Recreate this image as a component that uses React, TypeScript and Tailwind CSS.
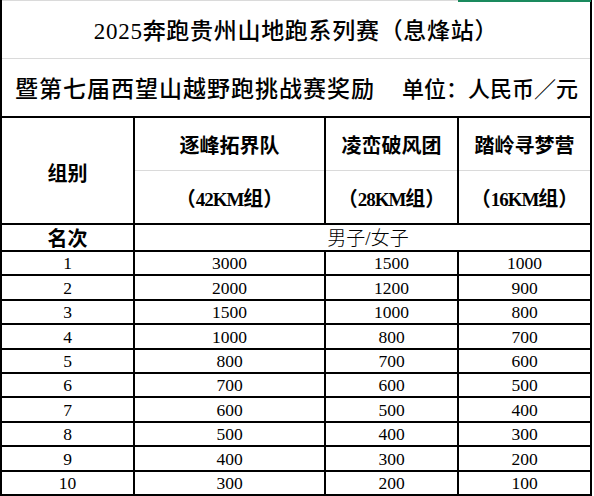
import React from "react";

const rows: [number, number, number, number][] = [
  [1, 3000, 1500, 1000],
  [2, 2000, 1200, 900],
  [3, 1500, 1000, 800],
  [4, 1000, 800, 700],
  [5, 800, 700, 600],
  [6, 700, 600, 500],
  [7, 600, 500, 400],
  [8, 500, 400, 300],
  [9, 400, 300, 200],
  [10, 300, 200, 100],
];

const font = { fontFamily: '"Liberation Serif", "Noto Sans CJK SC", serif' };

function HeadCell({ name, km }: { name: string; km: string }) {
  return (
    <div className="bg-white flex flex-col">
      <div className="h-[53px] border-b border-[#dadada] flex items-center justify-center pt-[4px] text-[20px] font-bold leading-none">
        {name}
      </div>
      <div className="flex-1 flex items-center justify-center pt-[4px] text-[20px] font-bold leading-none">
        <span>（</span>
        <span className="tracking-[-1px] text-[19px]">{km}</span>
        <span>组）</span>
      </div>
    </div>
  );
}

export default function App() {
  return (
    <div
      className="w-[594px] h-[496px] bg-white relative overflow-hidden text-black"
      style={font}
    >
      <div className="w-[592px] border-x-2 border-black">
        <div className="h-[59px] border-y border-[#dadada] flex items-center justify-center pt-[3px] text-[23px] font-medium leading-none tracking-[0.7px]">
          2025奔跑贵州山地跑系列赛（息烽站）
        </div>
        <div className="h-[57px] flex items-center pl-[13px] pt-[4px] text-[23px] font-medium leading-none">
          <span className="tracking-[1px]">暨第七届西望山越野跑挑战赛奖励</span>
          <span className="ml-[27px] text-[22px]">单位：人民币／元</span>
        </div>
        <div className="grid grid-cols-[131px_189px_131px_131px] grid-rows-[105px_25px_repeat(10,22.4px)] gap-[2px] bg-black pt-[2px] pb-[2px]">
          <div className="bg-white flex items-center justify-center pt-[6px] text-[20px] font-bold leading-none">
            组别
          </div>
          <HeadCell name="逐峰拓界队" km="42KM" />
          <HeadCell name="凌峦破风团" km="28KM" />
          <HeadCell name="踏岭寻梦营" km="16KM" />

          <div className="bg-white flex items-center justify-center pt-[2px] text-[20px] font-bold leading-none">
            名次
          </div>
          <div className="col-span-3 bg-white flex items-center justify-center pl-[11px] pt-[2px] text-[19px] font-light leading-none">
            男子/女子
          </div>

          {rows.map((r) =>
            r.map((v, i) => (
              <div
                key={`${r[0]}-${i}`}
                className="bg-white flex items-center justify-center pt-[2px] text-[17.5px] leading-none"
              >
                {v}
              </div>
            ))
          )}
        </div>
      </div>
      <div className="absolute top-0 left-[458px] w-[133px] h-[2px] bg-[#1a8a5e]" />
    </div>
  );
}
